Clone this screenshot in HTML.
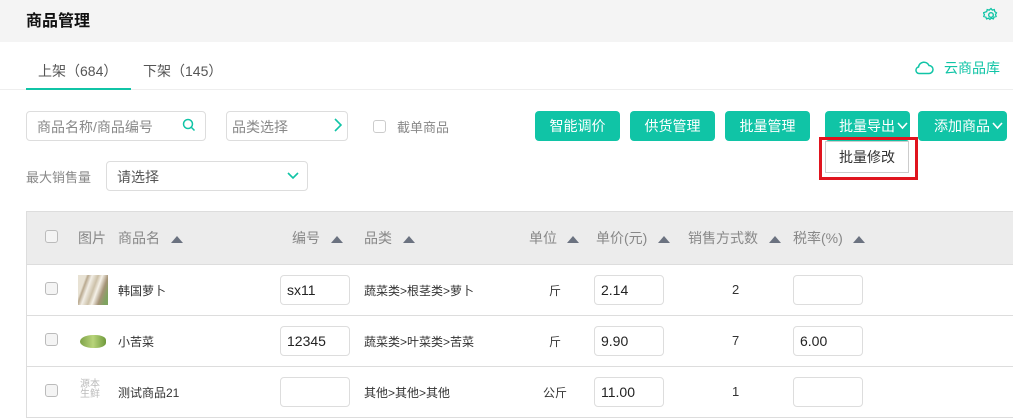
<!DOCTYPE html>
<html><head><meta charset="utf-8"><style>
*{margin:0;padding:0;box-sizing:border-box}
body{width:1013px;height:418px;overflow:hidden;background:#fff;font-family:"Liberation Sans","Noto Sans CJK SC",sans-serif;font-size:13px;color:#333;position:relative}
.a{position:absolute}
.hdr{left:0;top:0;width:1013px;height:42px;background:#f4f4f4}
.box{border:1px solid #ddd;border-radius:4px;background:#fff}
.btn{background:#10c4a6;color:#fff;border-radius:4px;height:30px;top:111px;font-size:14px;line-height:30px;text-align:center}
.gray{color:#888}
.cb{width:13px;height:13px;border:1px solid #bbb;border-radius:3px;background:#f4f4f4}
.tri{width:0;height:0;border-left:6px solid transparent;border-right:6px solid transparent;border-bottom:7px solid #6b7280}
.th{color:#888;font-size:14px;top:228px}
.row{left:26px;width:987px;height:1px;background:#ddd}
.inp{width:70px;height:30px;border:1px solid #ddd;border-radius:4px;background:#fff;font-size:14px;line-height:28px;padding-left:6px;color:#222}
</style></head><body>
<div class="a hdr"></div>
<div class="a" style="left:26px;top:7px;font-size:16px;font-weight:bold;color:#111">商品管理</div>
<svg class="a" style="left:983px;top:7px" width="16" height="16" viewBox="0 0 16 16"><circle cx="8" cy="8" r="2.3" fill="none" stroke="#10c4a6" stroke-width="1.4"/><path d="M8 1.5l1.3 1.6 2-.5.5 2 1.7 1.2-1 1.7.6 2-2 .5-.8 1.9-1.9-.8-1.5 1.3-1.4-1.3-1.9.8-.8-1.9-2-.5.6-2-1-1.7L3.7 4.6l.5-2 2 .5z" fill="none" stroke="#10c4a6" stroke-width="1.3"/></svg>
<div class="a" style="left:38px;top:61px;font-size:14px;color:#555">上架（684）</div>
<div class="a" style="left:143px;top:61px;font-size:14px;color:#555">下架（145）</div>
<div class="a" style="left:0;top:89px;width:1013px;height:1px;background:#eee"></div>
<div class="a" style="left:26px;top:88px;width:105px;height:2px;background:#10c4a6"></div>
<svg class="a" style="left:914px;top:60px" width="20" height="15" viewBox="0 0 20 15"><path d="M5 13.5h10a4 4 0 0 0 0-8 5.5 5.5 0 0 0-10.5 1.5A3.3 3.3 0 0 0 5 13.5z" fill="none" stroke="#10c4a6" stroke-width="1.5"/></svg>
<div class="a" style="left:944px;top:58px;font-size:14px;color:#10c4a6">云商品库</div>

<div class="a box" style="left:26px;top:111px;width:180px;height:30px"></div>
<div class="a gray" style="left:37px;top:117px;font-size:14px">商品名称/商品编号</div>
<svg class="a" style="left:182px;top:118px" width="14" height="14" viewBox="0 0 14 14"><circle cx="6" cy="6" r="4.5" fill="none" stroke="#10c4a6" stroke-width="1.5"/><path d="M9.5 9.5l3 3" stroke="#10c4a6" stroke-width="1.5"/></svg>
<div class="a box" style="left:226px;top:111px;width:122px;height:30px"></div>
<div class="a gray" style="left:232px;top:117px;font-size:14px">品类选择</div>
<svg class="a" style="left:334px;top:118px" width="8" height="14" viewBox="0 0 8 14"><path d="M1 1l6 6-6 6" fill="none" stroke="#10c4a6" stroke-width="1.6"/></svg>
<div class="a cb" style="left:373px;top:120px;background:#fff;border-color:#ccc"></div>
<div class="a gray" style="left:397px;top:117px;font-size:13px">截单商品</div>

<div class="a btn" style="left:535px;width:85px">智能调价</div>
<div class="a btn" style="left:630px;width:85px">供货管理</div>
<div class="a btn" style="left:725px;width:85px">批量管理</div>
<div class="a btn" style="left:825px;width:85px;text-align:left;padding-left:14px">批量导出<svg style="position:absolute;left:72px;top:11px" width="11" height="8" viewBox="0 0 11 8"><path d="M1 1l4.5 5L10 1" fill="none" stroke="#fff" stroke-width="1.6"/></svg></div>
<div class="a btn" style="left:918px;width:89px;text-align:left;padding-left:16px">添加商品<svg style="position:absolute;left:74px;top:11px" width="11" height="8" viewBox="0 0 11 8"><path d="M1 1l4.5 5L10 1" fill="none" stroke="#fff" stroke-width="1.6"/></svg></div>
<div class="a" style="left:825px;top:141px;width:84px;height:32px;border:1px solid #ccc;background:#fff;font-size:14px;line-height:30px;text-align:center;color:#333">批量修改</div>
<div class="a" style="left:819px;top:137px;width:99px;height:43px;border:3px solid #e0141e"></div>

<div class="a gray" style="left:26px;top:167px;font-size:13px">最大销售量</div>
<div class="a box" style="left:106px;top:161px;width:202px;height:30px"></div>
<div class="a" style="left:117px;top:167px;font-size:14px;color:#555">请选择</div>
<svg class="a" style="left:287px;top:172px" width="12" height="8" viewBox="0 0 12 8"><path d="M1 1l5 5 5-5" fill="none" stroke="#10c4a6" stroke-width="1.6"/></svg>

<div class="a" style="left:26px;top:211px;width:987px;height:53px;background:#ececec;border-top:1px solid #ddd"></div>
<div class="a" style="left:26px;top:211px;width:1px;height:207px;background:#ddd"></div>
<div class="a cb" style="left:45px;top:230px"></div>
<div class="a th" style="left:78px">图片</div>
<div class="a th" style="left:118px">商品名</div><div class="a tri" style="left:171px;top:236px"></div>
<div class="a th" style="left:292px">编号</div><div class="a tri" style="left:331px;top:236px"></div>
<div class="a th" style="left:364px">品类</div><div class="a tri" style="left:403px;top:236px"></div>
<div class="a th" style="left:529px">单位</div><div class="a tri" style="left:567px;top:236px"></div>
<div class="a th" style="left:596px">单价(元)</div><div class="a tri" style="left:658px;top:236px"></div>
<div class="a th" style="left:688px">销售方式数</div><div class="a tri" style="left:769px;top:236px"></div>
<div class="a th" style="left:793px">税率(%)</div><div class="a tri" style="left:853px;top:236px"></div>
<div class="a row" style="top:264px"></div>
<div class="a row" style="top:315px"></div>
<div class="a row" style="top:366px"></div>
<div class="a row" style="top:417px"></div>

<div class="a cb" style="left:45px;top:282px"></div>
<div class="a" style="left:78px;top:275px;width:30px;height:30px;background:linear-gradient(110deg,#e8e2d4 0 20%,#b9a98f 25%,#f2eee6 35%,#ccc0a8 50%,#f5f1e8 60%,#a59377 75%,#7fa360 90%)"></div>
<div class="a" style="left:118px;top:282px;font-size:12px">韩国萝卜</div>
<div class="a inp" style="left:280px;top:275px">sx11</div>
<div class="a" style="left:364px;top:282px;font-size:12px">蔬菜类&gt;根茎类&gt;萝卜</div>
<div class="a" style="left:549px;top:282px;font-size:12px">斤</div>
<div class="a inp" style="left:594px;top:275px">2.14</div>
<div class="a" style="left:732px;top:282px;font-size:13px">2</div>
<div class="a inp" style="left:793px;top:275px"></div>

<div class="a cb" style="left:45px;top:333px"></div>
<div class="a" style="left:80px;top:335px;width:26px;height:13px;border-radius:50% 40% 40% 50%;background:linear-gradient(90deg,#7ea248,#b8d47a,#6f9a3c)"></div>
<div class="a" style="left:118px;top:333px;font-size:12px">小苦菜</div>
<div class="a inp" style="left:280px;top:326px">12345</div>
<div class="a" style="left:364px;top:333px;font-size:12px">蔬菜类&gt;叶菜类&gt;苦菜</div>
<div class="a" style="left:549px;top:333px;font-size:12px">斤</div>
<div class="a inp" style="left:594px;top:326px">9.90</div>
<div class="a" style="left:732px;top:333px;font-size:13px">7</div>
<div class="a inp" style="left:793px;top:326px">6.00</div>

<div class="a cb" style="left:45px;top:384px"></div>
<div class="a" style="left:80px;top:380px;font-size:10px;line-height:10px;color:#bbb;width:26px">源本<br>生鲜</div>
<div class="a" style="left:118px;top:384px;font-size:12px">测试商品21</div>
<div class="a inp" style="left:280px;top:377px"></div>
<div class="a" style="left:364px;top:384px;font-size:12px">其他&gt;其他&gt;其他</div>
<div class="a" style="left:543px;top:384px;font-size:12px">公斤</div>
<div class="a inp" style="left:594px;top:377px">11.00</div>
<div class="a" style="left:732px;top:384px;font-size:13px">1</div>
<div class="a inp" style="left:793px;top:377px"></div>
</body></html>
